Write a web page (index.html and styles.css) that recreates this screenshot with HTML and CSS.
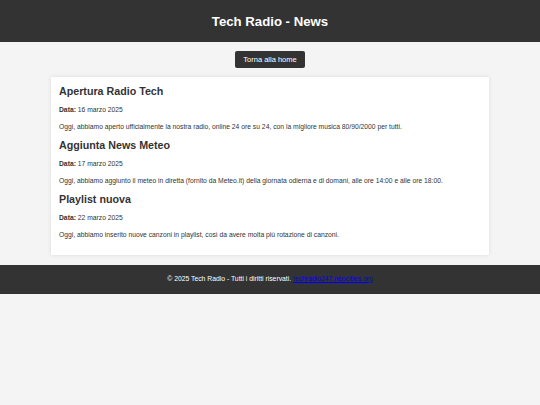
FILE: index.html
```html
<!DOCTYPE html>
<html lang="it">
<head>
<meta charset="utf-8">
<title>Tech Radio - News</title>
<link rel="stylesheet" href="styles.css">
</head>
<body>
<header class="site-header">
  <h1 class="site-title">Tech Radio - News</h1>
</header>
<nav class="nav">
  <a class="home-btn" href="#">Torna alla home</a>
</nav>
<main class="news-card">
  <article class="news-item">
    <h2 class="news-title">Apertura Radio Tech</h2>
    <p class="news-date"><strong>Data:</strong> 16 marzo 2025</p>
    <p class="news-text">Oggi, abbiamo aperto ufficialmente la nostra radio, online 24 ore su 24, con la migliore musica 80/90/2000 per tutti.</p>
  </article>
  <article class="news-item">
    <h2 class="news-title">Aggiunta News Meteo</h2>
    <p class="news-date"><strong>Data:</strong> 17 marzo 2025</p>
    <p class="news-text">Oggi, abbiamo aggiunto il meteo in diretta (fornito da Meteo.it) della giornata odierna e di domani, alle ore 14:00 e alle ore 18:00.</p>
  </article>
  <article class="news-item">
    <h2 class="news-title">Playlist nuova</h2>
    <p class="news-date"><strong>Data:</strong> 22 marzo 2025</p>
    <p class="news-text">Oggi, abbiamo inserito nuove canzoni in playlist, cos&igrave; da avere molta pi&ugrave; rotazione di canzoni.</p>
  </article>
</main>
<footer class="site-footer">
  <p class="footer-text">&copy; 2025 Tech Radio - Tutti i diritti riservati. <a class="footer-link" href="#">techradio247.neocities.org</a></p>
</footer>
</body>
</html>
```
FILE: styles.css
```css
html, body {
  margin: 0;
  padding: 0;
}
body {
  background: #f4f4f4;
  color: #333;
  font-family: "Liberation Sans", Arial, sans-serif;
}
.site-header {
  background: #333;
  color: #fff;
  height: 42px;
  display: flex;
  align-items: center;
  justify-content: center;
}
.site-title {
  margin: 0;
  font-size: 13.2px;
  font-weight: bold;
}
.nav {
  display: flex;
  justify-content: center;
  padding-top: 9px;
}
.home-btn {
  display: inline-block;
  background: #333;
  color: #fff;
  text-decoration: none;
  font-size: 7.5px;
  padding: 4px 8px;
  border-radius: 2px;
}
.news-card {
  display: block;
  background: #fff;
  margin: 9px 51px 0;
  padding: 8px 8px 8px;
  box-shadow: 0 0 4px rgba(0, 0, 0, 0.1);
}
.news-title {
  font-size: 10.7px;
  font-weight: bold;
  margin: 8.5px 0 8.75px;
}
.news-item:first-child .news-title {
  margin-top: 0;
}
.news-date,
.news-text {
  font-size: 6.75px;
  line-height: 8px;
  margin: 8.75px 0 8.5px;
}
.site-footer {
  background: #333;
  color: #fff;
  margin-top: 9.5px;
  padding: 10px 0 11px;
  text-align: center;
}
.footer-text {
  margin: 0;
  font-size: 6.8px;
  line-height: 8px;
}
.footer-link {
  color: #0000ee;
}
```
